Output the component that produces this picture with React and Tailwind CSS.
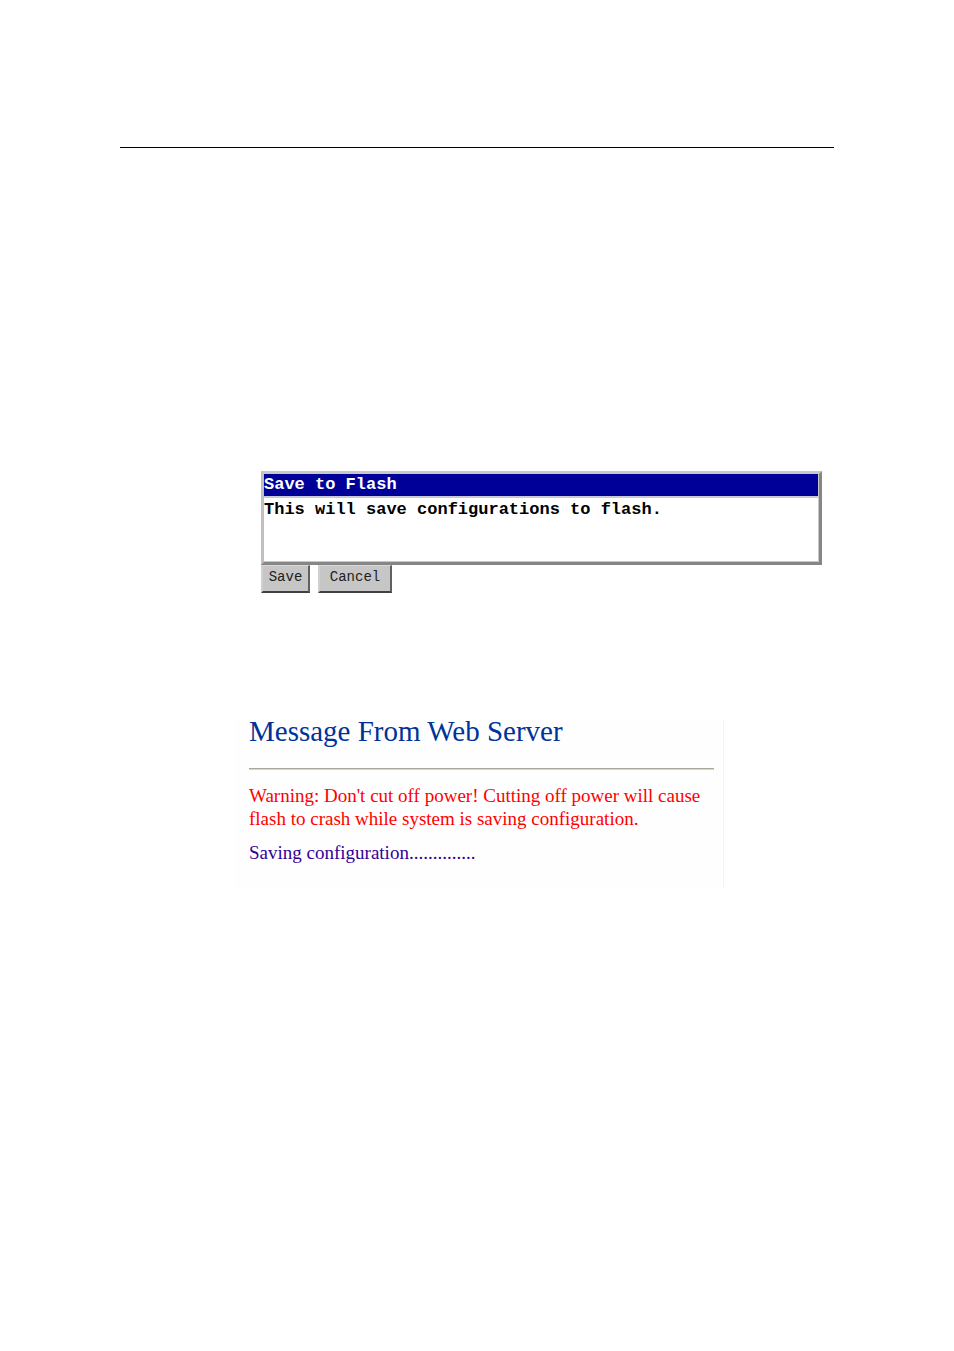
const buttonClass =
  "h-7 border-t border-l-2 border-r-2 border-b-2 border-t-[#d8d8d8] border-l-[#d0d0d0] border-r-[#606060] border-b-[#404040] bg-[#c6c6c6] pb-1 font-['Liberation_Mono',monospace] text-sm leading-5 text-[#202020]";

function SaveForm() {
  return (
    <form className="mr-3 ml-[141px]" onSubmit={(e) => e.preventDefault()}>
      <section className="border-3 border-t-[#c8c8c8] border-r-[#868686] border-b-[#868686] border-l-[#c0c0c0] font-['Liberation_Mono',monospace] text-[17px] font-bold">
        <div className="border-r border-b border-[#c8c8c8]">
          <h1 className="border-b-2 border-[#c8c8d8] bg-[#000099] leading-[22px] text-white">Save to Flash</h1>
          <p className="h-[63px] leading-6 text-black">This will save configurations to flash.</p>
        </div>
      </section>
      <div className="flex gap-2">
        <button type="submit" className={`w-[49px] ${buttonClass}`}>Save</button>
        <button type="button" className={`w-[74px] ${buttonClass}`}>Cancel</button>
      </div>
    </form>
  );
}

function ServerMessage() {
  return (
    <section className="mt-[127px] mr-[110px] ml-[114px] border-r border-[#f4f4f4] bg-[#fefefe] pr-[9px] pb-6 pl-[15px]">
      <h2 className="text-[29px] leading-[22px] text-[#003399]">Message From Web Server</h2>
      <hr className="mt-[26px] border-t border-b border-t-[#aca899] border-b-[#d8d6cc]" />
      <p className="mt-3.5 text-[19px] leading-[23px] text-[#ff0000]">
        Warning: Don't cut off power! Cutting off power will cause flash to crash while system is saving configuration.
      </p>
      <p className="mt-[11px] text-[19px] leading-[23px] text-[#330099]">Saving configuration..............</p>
    </section>
  );
}

export default function App() {
  return (
    <main className="min-h-screen bg-white px-[120px] pt-[147px] font-['Liberation_Serif',serif]">
      <hr className="mb-[323px] border-t border-black" />
      <SaveForm />
      <ServerMessage />
    </main>
  );
}
